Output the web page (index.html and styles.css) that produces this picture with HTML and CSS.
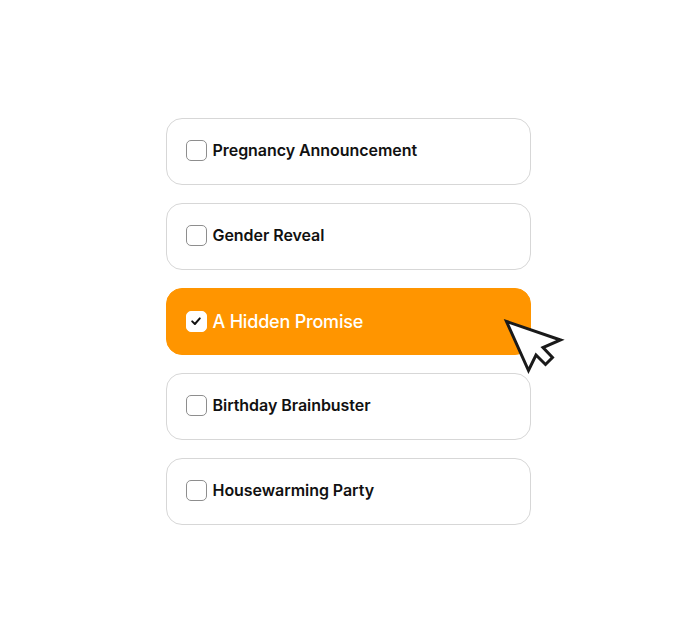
FILE: index.html
```html
<!DOCTYPE html>
<html lang="en">
<head>
<meta charset="utf-8">
<title>Options</title>
<link rel="stylesheet" href="styles.css">
</head>
<body>
<main class="stage">
  <ul class="options">
    <li class="option">
      <span class="box"></span>
      <span class="label">Pregnancy Announcement</span>
    </li>
    <li class="option">
      <span class="box"></span>
      <span class="label">Gender Reveal</span>
    </li>
    <li class="option selected">
      <span class="box">
        <svg class="check" viewBox="0 0 12 12" width="12" height="12"><path d="M2.2 6.4 L4.9 9 L9.8 3.4" fill="none" stroke="#111" stroke-width="2" stroke-linecap="round" stroke-linejoin="round"/></svg>
      </span>
      <span class="label">A Hidden Promise</span>
      <svg class="cursor" viewBox="0 0 64 60" width="64" height="60">
        <path d="M3.5 3.5 L57.5 22 L40 29.5 L49.5 39.5 L42.5 46.5 L33 37 L25.5 52.5 Z" fill="#fff" stroke="#1a1a1a" stroke-width="3" stroke-linejoin="miter" stroke-miterlimit="10"/>
      </svg>
    </li>
    <li class="option">
      <span class="box"></span>
      <span class="label">Birthday Brainbuster</span>
    </li>
    <li class="option">
      <span class="box"></span>
      <span class="label">Housewarming Party</span>
    </li>
  </ul>
</main>
</body>
</html>
```

FILE: styles.css
```css
* { box-sizing: border-box; }
html, body {
  margin: 0;
  padding: 0;
  background: #ffffff;
}
body {
  font-family: Inter, "Noto Sans", sans-serif;
}
.stage {
  width: 698px;
  height: 644px;
  display: flex;
  justify-content: flex-start;
  padding: 117.5px 0 0 166px;
}
.options {
  list-style: none;
  margin: 0;
  padding: 0;
  display: flex;
  flex-direction: column;
  gap: 18px;
  width: 365px;
}
.option {
  position: relative;
  height: 67px;
  border: 1px solid #d7d7d7;
  border-radius: 16px;
  background: #fff;
  display: flex;
  align-items: center;
  padding: 0 19px 2px 18.5px;
  gap: 6px;
}
.box {
  width: 21px;
  height: 21px;
  border: 1.5px solid #8e8e8e;
  border-radius: 5px;
  background: #fff;
  display: flex;
  align-items: center;
  justify-content: center;
  flex: none;
}
.label {
  font-size: 16px;
  font-weight: 600;
  color: #111111;
  letter-spacing: -0.05px;
}
.selected {
  background: #ff9500;
  border-color: #ff9500;
  padding-bottom: 0;
}
.selected .box {
  border-color: #fff;
}
.selected .label {
  color: #ffffff;
  font-size: 18px;
  font-weight: 500;
  letter-spacing: -0.2px;
}
.cursor {
  position: absolute;
  left: 336px;
  top: 29.5px;
}
```
